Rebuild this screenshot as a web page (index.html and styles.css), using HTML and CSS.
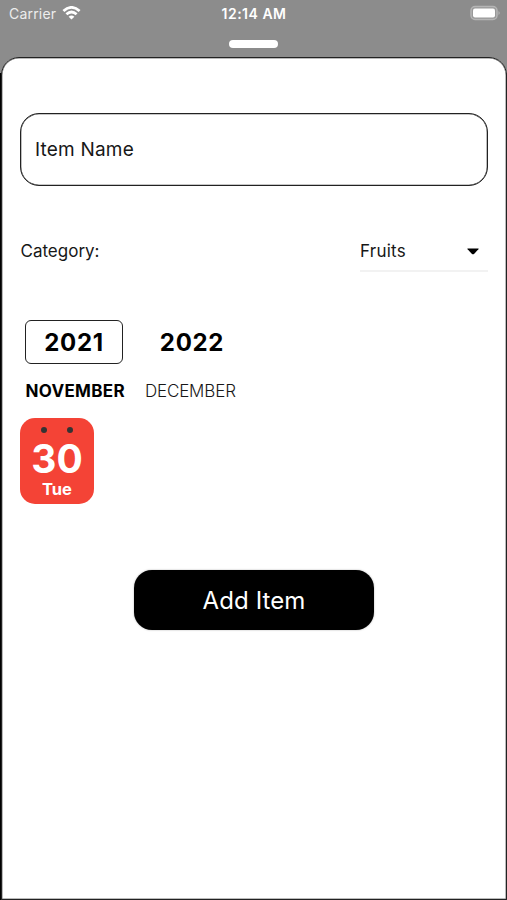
FILE: index.html
```
<!DOCTYPE html>
<html lang="en">
<head>
<meta charset="utf-8">
<title>Add Item</title>
<link rel="stylesheet" href="styles.css">
</head>
<body>
<div class="screen">
  <header class="status">
    <div class="carrier"><span>Carrier</span>
      <svg class="wifi" width="19" height="14" viewBox="0 0 18 14" fill="none" stroke="#fff" stroke-width="2.8"><path d="M.9 5Q9-2.200 17.100 5M3.900 8.200Q9 3.700 14.100 8.200"/><path d="M6.100 10.700Q9 8.200 11.900 10.700L9 13.600Z" fill="#fff" stroke="none"/></svg>
    </div>
    <div class="time">12:14 AM</div>
    <svg class="battery" width="32" height="16" viewBox="0 0 32 16"><rect x="2" y="1.500" width="26" height="13" rx="4" fill="#999" stroke="#b5b5b5" stroke-width="1.500"/><rect x="4" y="3.500" width="22" height="9" rx="2" fill="#fff"/><path d="M29.500 6Q32 8 29.500 10Z" fill="#b5b5b5"/></svg>
  </header>
  <div class="handle"></div>
  <main class="sheet">
    <div class="field"><span class="placeholder">Item Name</span></div>
    <div class="category">
      <span class="label">Category:</span>
      <div class="select"><span class="value">Fruits</span><svg width="12" height="7" viewBox="0 0 12 7"><path d="M.7.400h10.600Q12 .6 11.400 1.300L7 5.900Q6 6.700 5 5.900L.6 1.300Q0 .6 .7.400Z"/></svg></div>
    </div>
    <div class="years"><div class="year selected"><span>2021</span></div><div class="year"><span>2022</span></div></div>
    <div class="months"><span class="month active">NOVEMBER</span><span class="month">DECEMBER</span></div>
    <div class="day"><div class="rings"><i></i><i></i></div><span class="date">30</span><span class="weekday">Tue</span></div>
    <div class="add"><span>Add Item</span></div>
  </main>
</div>
</body>
</html>
```
FILE: styles.css
```
* { box-sizing: border-box; }
body { margin: 0; font-family: Inter, "Liberation Sans", sans-serif; color: #171717; }
.screen { height: 900px; overflow: hidden; display: flex; flex-direction: column; background: linear-gradient(#8c8c8c 73px, #000 73px); }
.status { height: 28px; flex: none; display: grid; grid-template-columns: 1fr 70px 1fr; align-items: center; padding: 0 6px 2px 9px; color: #fff; }
.carrier { display: flex; align-items: center; gap: 6px; font-size: 14px; letter-spacing: .2px; color: #ededed; }
.wifi { margin-top: -1px; }
.time { font-size: 14px; font-weight: 600; letter-spacing: .5px; white-space: nowrap; display: flex; justify-content: center; margin-right: 2px; }
.battery { justify-self: end; }
.handle { width: 49px; height: 8px; flex: none; border-radius: 4px; background: #fff; margin: 12px auto 9px; }
.sheet { flex: 1; margin: 0 0 0 1px; padding: 55px 18px 0 18px; background: #fff; border: 1.500px solid #222; border-radius: 18px 18px 0 0; box-shadow: inset 0 0 0 .5px #777; display: flex; flex-direction: column; }
.field { height: 73px; border: 1px solid #222; border-radius: 19px; display: flex; align-items: center; padding-left: 14px; font-size: 19px; letter-spacing: .2px; box-shadow: inset 0 0 0 .3px #222; }
.category { height: 41px; margin-top: 45px; display: flex; justify-content: space-between; font-size: 17px; line-height: 41px; }
.label { padding-left: .5px; }
.select { width: 128px; border-bottom: 2px solid #f2f2f2; display: flex; justify-content: space-between; align-items: center; padding: 2px 9px 0 0; letter-spacing: .25px; }
.years { display: flex; margin: 48px 0 0 5px; }
.year { width: 98px; height: 44px; display: flex; align-items: center; justify-content: center; font-size: 24px; font-weight: 700; letter-spacing: .7px; color: #000; }
.year + .year { margin-left: 20px; }
.selected { border: 1.500px solid #222; border-radius: 6px; }
.months { display: flex; gap: 20px; margin: 17px 0 0 5.500px; line-height: 21px; font-size: 17px; }
.month { font-weight: 300; letter-spacing: -.15px; }
.active { font-weight: 700; letter-spacing: .3px; color: #000; }
.day { width: 74px; height: 86px; margin-top: 16px; border-radius: 15px; background: #f44336; color: #fff; display: flex; flex-direction: column; align-items: center; }
.rings { display: flex; gap: 20px; margin-top: 9px; height: 6px; }
.rings i { width: 6px; height: 6px; border-radius: 50%; background: #333; }
.date { font-size: 39px; font-weight: 700; line-height: 44px; margin-top: 4px; }
.weekday { font-size: 16.500px; font-weight: 700; line-height: 17px; }
.add { width: 240px; height: 60px; margin: 66px auto 0; border-radius: 18px; background: #000; color: #fff; display: flex; align-items: center; justify-content: center; font-size: 24px; letter-spacing: .1px; box-shadow: 0 0 2px #aaa; }
```
